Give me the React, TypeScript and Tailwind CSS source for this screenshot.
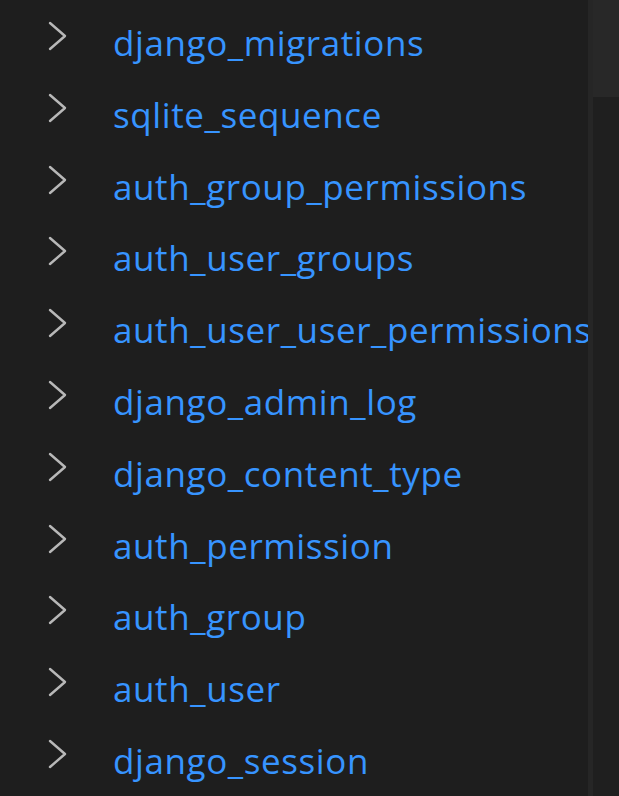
import React from "react";

const TABLES = [
  "django_migrations",
  "sqlite_sequence",
  "auth_group_permissions",
  "auth_user_groups",
  "auth_user_user_permissions",
  "django_admin_log",
  "django_content_type",
  "auth_permission",
  "auth_group",
  "auth_user",
  "django_session",
];

function Chevron() {
  return (
    <svg width="20" height="30" viewBox="0 0 20 30" className="shrink-0">
      <polyline
        points="2,2 17,15 2,28"
        fill="none"
        stroke="#b8b8b8"
        strokeWidth="2.4"
        strokeLinecap="round"
        strokeLinejoin="round"
      />
    </svg>
  );
}

export default function App() {
  return (
    <div className="flex h-[796px] w-[619px] overflow-hidden bg-[#1e1e1e]">
      <div className="flex min-w-0 flex-1 flex-col pt-[8px]">
        {TABLES.map((name) => (
          <div key={name} className="flex h-[71.8px] shrink-0 items-start pl-[48px]">
            <div className="mt-[13px]">
              <Chevron />
            </div>
            <span
              className="ml-[45px] -mt-[1px] whitespace-nowrap text-[35px] leading-[72px] tracking-[0.6px] text-[#3794ff]"
              style={{ fontFamily: '"Open Sans", "Noto Sans", sans-serif' }}
            >
              {name}
            </span>
          </div>
        ))}
      </div>
      <div className="w-[5px] shrink-0 bg-[#262626]" />
      <div className="flex w-[26px] shrink-0 flex-col">
        <div className="h-[97px] bg-[#282828]" />
        <div className="flex-1 bg-[#1f1f1f]" />
      </div>
    </div>
  );
}
